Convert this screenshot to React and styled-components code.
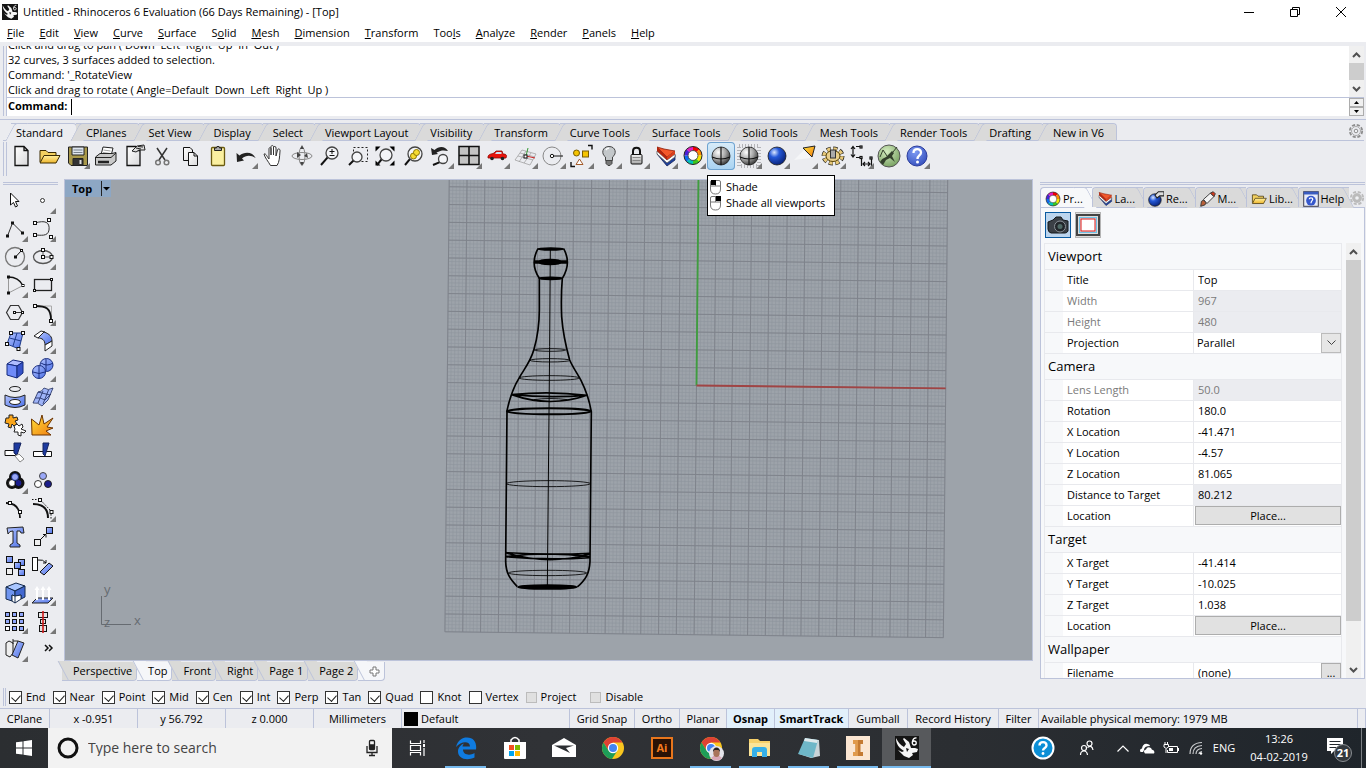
import React, { useState } from "react";
import styled, { createGlobalStyle, css } from "styled-components";

const GlobalStyle = createGlobalStyle`
  * {
    box-sizing: border-box;
  }
  body {
    margin: 0;
    font-family: "Open Sans", "Noto Sans", sans-serif;
    font-size: 11px;
    line-height: 16px;
    color: #000;
    background: #ebecf0;
  }
  button, input, select {
    font: inherit;
    color: inherit;
    margin: 0;
    padding: 0;
    border: 0;
    border-radius: 0;
    background: none;
  }
  svg {
    display: block;
    flex: none;
  }
`;

const line = "#bcc3da";

const Window = styled.div`
  display: flex;
  flex-direction: column;
  height: 100vh;
  overflow: hidden;
`;

const Defs = styled.svg`
  position: absolute;
  width: 0;
  height: 0;
`;

/* title + menu */

const TitleBar = styled.header`
  display: flex;
  align-items: center;
  height: 23px;
  flex: none;
  padding: 0 2px;
  background: #fff;
`;

const Title = styled.h1`
  flex: 1;
  margin: 0;
  padding-left: 5px;
  font-size: 11px;
  font-weight: normal;
`;

const CaptionButton = styled.button`
  display: flex;
  align-items: center;
  justify-content: center;
  width: 46px;
  height: 23px;
`;

const MenuBar = styled.nav`
  display: flex;
  align-items: center;
  gap: 15px;
  height: 19px;
  flex: none;
  padding-left: 7px;
  background: #fff;
`;

const MenuItem = styled.button`
  line-height: 18px;
`;

/* command area */

const CommandArea = styled.section`
  flex: none;
  display: flex;
  height: 78px;
  padding: 4px 2px 3px 3px;
  border-bottom: 1px solid ${line};
`;

const Grip = styled.div`
  flex: none;
  width: 4px;
  border-left: 1px solid ${line};
  border-right: 1px solid ${line};
  ${(p) =>
    p.$flat &&
    css`
      width: auto;
      height: 3px;
      border: 0;
      border-top: 1px solid ${line};
      border-bottom: 1px solid ${line};
    `}
`;

const CommandBody = styled.div`
  flex: 1;
  display: flex;
  flex-direction: column;
`;

const HistoryRow = styled.div`
  display: flex;
  height: 52px;
  border-bottom: 1px solid ${line};
`;

const History = styled.div`
  flex: 1;
  display: flex;
  flex-direction: column;
  justify-content: flex-end;
  overflow: hidden;
  padding-left: 1px;
  background: #fff;
`;

const HistoryLine = styled.div`
  flex: none;
  line-height: 15px;
  white-space: pre;
`;

const Prompt = styled.div`
  flex: 1;
  display: flex;
  align-items: center;
  background: #fff;

  label {
    font-weight: bold;
    padding: 0 4px 2px 1px;
  }
  input {
    flex: 1;
    height: 16px;
    outline: none;
    border-left: 1px solid #000;
  }
`;

const Spin = styled.div`
  display: flex;
  flex-direction: column;
  width: 15px;
  height: 18px;

  button {
    flex: 1;
    display: flex;
    align-items: center;
    justify-content: center;
    border: 1px solid #acacac;
    background: #f0f0f0;
  }
`;

const ScrollBar = styled.div`
  flex: none;
  display: flex;
  flex-direction: column;
  align-items: stretch;
  width: 15px;
  background: #f0f0f0;

  button {
    display: flex;
    align-items: center;
    justify-content: center;
    height: 17px;
  }
`;

const Thumb = styled.div`
  flex: ${(p) => p.$grow};
  background: #cdcdcd;
`;

const Spacer = styled.div`
  flex: ${(p) => p.$grow || 1};
`;

/* toolbar tabs */

const ToolTabs = styled.div`
  flex: none;
  display: flex;
  align-items: flex-end;
  height: 21px;
  padding: 0 2px 0 3px;
`;

const TabStrip = styled.div`
  flex: 1;
  display: flex;
  align-items: flex-end;
  height: 21px;
  padding-left: 8px;
  border-bottom: 1px solid ${line};
`;

const ToolTab = styled.button`
  position: relative;
  z-index: 0;
  height: 17px;
  padding: 0 12px 0 10px;
  line-height: 17px;
  white-space: nowrap;
  border-top: 1px solid ${line};
  border-right: 1px solid ${line};
  border-top-right-radius: 4px;
  background: ${(p) => (p.$active ? "#ebecf0" : "#dadada")};
  background-clip: padding-box;

  &::before {
    content: "";
    position: absolute;
    z-index: -1;
    top: -1px;
    left: -1px;
    width: 12px;
    height: 17px;
    border-top: 1px solid ${line};
    border-left: 1px solid ${line};
    border-top-left-radius: 3px;
    transform: skewX(-28deg);
    background: ${(p) => (p.$active ? "#ebecf0" : "#dadada")};
  }
  ${(p) =>
    p.$active
      ? css`
          padding-left: 5px;
          padding-right: 13px;
          margin-bottom: -1px;
          height: 18px;
        `
      : css`
          margin-left: -1px;
        `}
`;

const GearButton = styled.button`
  display: flex;
  align-items: center;
  justify-content: center;
  width: 16px;
  height: 18px;
`;

const Toolbar = styled.div`
  flex: none;
  display: flex;
  height: 38px;
  padding: 1px 0 0 3px;
`;

const ToolbarGrip = styled(Grip)`
  height: 34px;
`;

const Tool = styled.button`
  position: relative;
  flex: none;
  width: 28px;
  height: 28px;
  ${(p) =>
    p.$hot &&
    css`
      border-radius: 4px;
      box-shadow: inset 0 0 0 1px #6fa3d0;
      background: linear-gradient(#d9ecf9, #a9d3f2);
    `}
`;

const Tooltip = styled.div`
  position: absolute;
  z-index: 5;
  top: 33px;
  left: 0;
  display: flex;
  flex-direction: column;
  width: max-content;
  padding: 3px 9px 4px 2px;
  border: 1px solid #000;
  background: #fff;

  span {
    display: flex;
    align-items: center;
    gap: 5px;
  }
`;

/* middle */

const Workspace = styled.main`
  flex: 1;
  display: flex;
  min-height: 0;
`;

const SideBar = styled.aside`
  flex: none;
  width: 64px;
  padding: 3px 6px 0 1px;
`;

const SideTools = styled.div`
  display: grid;
  grid-template-columns: 28px 28px;
  margin-top: 2px;
`;

const SideGrip = styled(Grip)`
  margin: 0 0 0 2px;
`;

const Center = styled.div`
  flex: 1;
  min-width: 0;
  display: flex;
  flex-direction: column;
`;

const Viewport = styled.div`
  position: relative;
  flex: 1;
  min-height: 0;
  overflow: hidden;
  border: 1px solid ${line};
  background: #9da3aa;
`;

const ViewportTitle = styled.button`
  position: absolute;
  top: 0;
  left: 0;
  display: flex;
  align-items: center;
  gap: 9px;
  height: 17px;
  padding: 0 1px 0 7px;
  font-weight: bold;
  background: #8da7c4;
`;

const Scene = styled.svg`
  width: 100%;
  height: 100%;
`;

const AxisIcon = styled.svg`
  position: absolute;
  left: 30px;
  bottom: 24px;
`;

const ViewTabs = styled.div`
  flex: none;
  display: flex;
  height: 25px;
  padding-top: 1px;
`;

const ViewTab = styled.button`
  position: relative;
  z-index: 0;
  height: 19px;
  padding: 0 4px 0 11px;
  border-bottom: 1px solid ${line};
  border-right: 1px solid ${line};
  border-bottom-right-radius: 4px;
  background: ${(p) => (p.$active ? "#f5f6f9" : "#dadad8")};
  background-clip: padding-box;

  &::before {
    content: "";
    position: absolute;
    z-index: -1;
    bottom: -1px;
    left: 1px;
    width: 12px;
    height: 19px;
    border-bottom: 1px solid ${line};
    border-left: 1px solid ${line};
    transform: skewX(28deg);
    background: ${(p) => (p.$active ? "#f5f6f9" : "#dadad8")};
  }
  &:first-child {
    margin-left: -2px;
  }
`;

/* properties */

const Panel = styled.aside`
  flex: none;
  display: flex;
  flex-direction: column;
  width: 333px;
  padding: 3px 1px 7px 7px;
`;

const PanelTabs = styled.div`
  display: flex;
  align-items: flex-end;
  height: 22px;
  padding-top: 2px;
`;

const PanelTab = styled.button`
  position: relative;
  z-index: 0;
  display: flex;
  align-items: center;
  gap: 2px;
  flex: 1;
  height: 20px;
  padding: 2px 0 0 4px;
  white-space: nowrap;
  border-left: 1px solid ${line};
  border-top: 1px solid ${line};
  border-top-left-radius: 4px;
  background: ${(p) => (p.$active ? "#f7f8fa" : "#dadada")};
  background-clip: padding-box;

  &::after {
    content: "";
    position: absolute;
    z-index: -1;
    top: -1px;
    right: 0;
    width: 12px;
    height: 20px;
    border-top: 1px solid ${line};
    border-right: 1px solid ${line};
    border-top-right-radius: 3px;
    transform: skewX(28deg);
    background: ${(p) => (p.$active ? "#f7f8fa" : "#dadada")};
  }
`;

const PanelBody = styled.div`
  flex: 1;
  min-height: 0;
  display: flex;
  flex-direction: column;
  border: 1px solid ${line};
  background: #f7f8fa;
`;

const ModeButtons = styled.div`
  display: flex;
  gap: 4px;
  flex: none;
  padding: 4px 0 5px 4px;
`;

const ModeButton = styled.button`
  display: flex;
  align-items: center;
  justify-content: center;
  width: 26px;
  height: 26px;
  border: 1px solid ${(p) => (p.$on ? "#0a5aa0" : "#b4b4b4")};
  background: ${(p) => (p.$on ? "#bcd5ee" : "#dcdcdc")};
`;

const PropertyArea = styled.div`
  flex: 1;
  min-height: 0;
  display: flex;
  gap: 4px;
  padding: 0 3px 0 3px;
`;

const PropertyList = styled.div`
  flex: 1;
  overflow: hidden;
  border: 1px solid #e8e9ed;
  border-bottom: 0;
`;

const GroupTitle = styled.h2`
  margin: 0;
  height: 26px;
  padding-left: 3px;
  font-size: 13px;
  font-weight: normal;
  line-height: 25px;
  border-bottom: 1px solid #e8e9ed;
`;

const Row = styled.div`
  display: grid;
  grid-template-columns: 18px 131px 1fr;
  height: 21px;
  color: ${(p) => (p.$dim ? "#7a7a7a" : "#000")};

  > * {
    border-bottom: 1px solid #e8e9ed;
  }
`;

const Name = styled.label`
  padding-left: 4px;
  line-height: 20px;
  border-right: 1px solid #e8e9ed;
  background: #fff;
`;

const Value = styled.div`
  display: flex;
  min-width: 0;
  background: ${(p) => (p.$locked ? "#ebecf0" : "#fff")};

  input {
    flex: 1;
    min-width: 0;
    padding-left: 4px;
    outline: none;
  }
`;

const SelectBox = styled.div`
  position: relative;
  flex: 1;
  display: flex;

  select {
    flex: 1;
    appearance: none;
    padding-left: 3px;
    outline: none;
  }
  span {
    position: absolute;
    top: 0;
    right: 0;
    display: flex;
    align-items: center;
    justify-content: center;
    width: 20px;
    height: 20px;
    border: 1px solid #bbb;
    background: #e6e6e6;
    pointer-events: none;
  }
`;

const PushButton = styled.button`
  flex: ${(p) => (p.$small ? "none" : 1)};
  width: ${(p) => (p.$small ? "20px" : "auto")};
  margin: 0 0 1px 1px;
  line-height: 17px;
  border: 1px solid #adadad;
  background: #e1e1e1;
`;

/* osnap + status */

const Osnaps = styled.div`
  flex: none;
  display: flex;
  align-items: center;
  gap: 7px;
  height: 22px;
  padding: 0 0 0 3px;
`;

const OsnapGrip = styled(Grip)`
  width: 3px;
  height: 18px;
  margin-right: -4px;
`;

const Check = styled.label`
  display: flex;
  align-items: center;
  gap: 4px;
  margin-left: ${(p) => (p.$apart ? "7px" : 0)};

  input {
    position: relative;
    appearance: none;
    width: 13px;
    height: 13px;
    border: 1px solid #333;
    background: #fff;
  }
  input:disabled {
    width: 11px;
    height: 11px;
    border-color: #bcbcbc;
    background: #e0e0e0;
  }
  input:checked::after {
    content: "";
    position: absolute;
    top: 1px;
    left: 3px;
    width: 5px;
    height: 7px;
    border: solid #222;
    border-width: 0 1px 1px 0;
    transform: rotate(42deg);
  }
`;

const StatusBar = styled.footer`
  flex: none;
  display: flex;
  height: 20px;
  border-top: 1px solid ${line};
`;

const StatusCell = styled.button`
  flex: ${(p) => (p.$grow ? 1 : "none")};
  display: flex;
  align-items: center;
  justify-content: ${(p) => (p.$left ? "flex-start" : "center")};
  gap: 3px;
  width: ${(p) => p.$w}px;
  padding-left: ${(p) => (p.$left ? "2px" : 0)};
  white-space: nowrap;
  font-weight: ${(p) => (p.$on ? "bold" : "normal")};
  border-right: 1px solid ${line};
  background: ${(p) => (p.$on ? "#e2f0fb" : "transparent")};
`;

const Swatch = styled.i`
  width: 14px;
  height: 14px;
  background: #000;
`;

/* taskbar */

const TaskBar = styled.div`
  flex: none;
  display: flex;
  height: 40px;
  color: #fff;
  background: linear-gradient(90deg, #2b2e31, #303236 40%, #2b2e32 70%, #1f252b);
`;

const TaskButton = styled.button`
  flex: none;
  display: flex;
  align-items: center;
  justify-content: center;
  width: ${(p) => p.$w || 49}px;
  background: ${(p) => (p.$active ? "#57595c" : "transparent")};
  box-shadow: ${(p) => (p.$active ? "inset 0 -2px #76b9ed" : "none")};
  border: solid transparent;
  border-width: 0 ${(p) => (p.$open ? "4px" : "0")};

  ${(p) =>
    p.$open &&
    css`
      background: linear-gradient(#76b9ed, #76b9ed) bottom / 100% 2px no-repeat padding-box;
    `}
`;

const SearchBox = styled.label`
  flex: none;
  display: flex;
  align-items: center;
  gap: 9px;
  width: 344px;
  padding: 0 12px 0 9px;
  color: #333;
  background: #f2f2f2;

  input {
    flex: 1;
    min-width: 0;
    font-size: 14px;
    outline: none;
  }
  input::placeholder {
    color: #444;
    opacity: 1;
  }
`;

const Clock = styled.button`
  width: 78px;
  line-height: 18px;
  white-space: pre-line;
`;

const Language = styled.button`
  width: 32px;
`;

const ShowDesktop = styled.button`
  width: 5px;
  border-left: 1px solid #7b7f84;
`;

/* icon pieces */

const Dot = ({ x, y, s = 3 }) => (
  <rect x={x - s / 2} y={y - s / 2} width={s} height={s} fill="#fff" stroke="#111" />
);

const Ball = ({ cx, cy, r, fill, stroke = "#1b2f80" }) => (
  <circle cx={cx} cy={cy} r={r} fill={fill} stroke={stroke} />
);

const Lens = ({ x = 17, y = 12, r = 6 }) => (
  <g>
    <path d={`M${x - r * 0.7} ${y + r * 0.7} L6 23`} stroke="#111" strokeWidth="2" />
    <circle cx={x} cy={y} r={r} fill="#f4f5f8" stroke="#444" strokeWidth="1.3" />
  </g>
);

const Wheel = ({ cx, cy, r }) => {
  const colors = ["#f00000", "#ff8a00", "#f4e800", "#3cc81e", "#00c2b8", "#0a6cf0", "#4b1fd8", "#e01cc0"];
  const at = (a) => `${cx + r * Math.sin(a)} ${cy - r * Math.cos(a)}`;
  return (
    <g>
      {colors.map((c, i) => (
        <path
          key={c}
          fill={c}
          d={`M${cx} ${cy} L${at((i * Math.PI) / 4)} A${r} ${r} 0 0 1 ${at(((i + 1) * Math.PI) / 4)} Z`}
        />
      ))}
      <circle cx={cx} cy={cy} r={r} fill="none" stroke="#222" />
      <circle cx={cx} cy={cy} r={r * 0.55} fill="#fff" stroke="#333" strokeWidth="0.8" />
    </g>
  );
};

const Layers = () => (
  <g strokeLinejoin="round" strokeWidth="0.8">
    <path d="M6 12 L16 24 L24 18 V13 L16 18 Z" fill="#1d3f9c" stroke="#15245a" />
    <path d="M6 9 L16 18 L24 12 V15 L16 21 L6 12 Z" fill="#fff" stroke="#555" />
    <path d="M6 5 L16 15 L24 9 L13 7 Z" fill="#f4572a" stroke="#8c1b06" />
    <path d="M6 5 L16 15 V18 L6 9 Z" fill="#b4240c" />
    <path d="M16 15 L24 9 V12 L16 18 Z" fill="#d93c18" />
  </g>
);

const Sphere = ({ grey, pixels }) => (
  <g>
    {pixels && (
      <rect x="4" y="4" width="20" height="20" fill="none" stroke="#b4b4b8" strokeWidth="4" strokeDasharray="1 2" />
    )}
    <circle cx="14" cy="14" r="9" fill={grey ? "url(#greyBall)" : "url(#blueBall)"} stroke="#1b1b1b" strokeWidth="0.8" />
    {grey && <path d="M5 15 q9 4 18 0 M14 5 v18" fill="none" stroke="#111" strokeWidth="1.2" />}
  </g>
);

const Gear = ({ solid }) => (
  <svg width="16" height="16" viewBox="0 0 16 16">
    <circle cx="8" cy="8" r="6.200" fill="none" stroke={solid ? "#bbb" : "#8d8d8d"} strokeWidth="1.800" strokeDasharray="3.200 1.670" />
    <circle cx="8" cy="8" r="4.500" fill={solid ? "#bbb" : "#ebecf0"} stroke={solid ? "#bbb" : "#999"} strokeWidth="0.800" />
    <circle cx="8" cy="8" r="1.800" fill="#f0f1f4" stroke={solid ? "none" : "#8d8d8d"} />
  </svg>
);

const Chevron = ({ down, color = "#505050", w = 9 }) => (
  <svg width={w} height="8" viewBox="0 0 9 8" fill="none" stroke={color} strokeWidth="2">
    <path d={down ? "M1 2 L4.500 5.500 L8 2" : "M1 6 L4.500 2.500 L8 6"} />
  </svg>
);

const Caret = ({ down }) => (
  <svg width="5" height="3" viewBox="0 0 5 3">
    <path d={down ? "M0 0 H5 L2.500 3 Z" : "M0 3 H5 L2.500 0 Z"} />
  </svg>
);

const Rhino = ({ size }) => (
  <svg width={size} height={size} viewBox="0 0 24 24">
    <rect width="24" height="24" fill="#151515" />
    <path d="M1 2 C3 6 5 9 9 11 L11 8 L8 3 L9 2 L14 6 L16 12 L20 12 L23 13 L22 16 L17 17 L18 19 L14 22 L9 20 L3 14 L7 16 L9 15 C4 12 1 8 1 2 Z" fill="#f6f6f6" />
    <path d="M11 12 L14 13 L12 16 Z" fill="#151515" />
    <path d="M21.500 2 C17 1.500 16 9 19 9 C22 9 22 5 19 5 C18 5 17.500 6 17.500 6.500" fill="none" stroke="#fff" strokeWidth="1.300" />
  </svg>
);

const page = <path d="M8 4.500 H17 L21 8.500 V23.500 H8 Z M17 4.500 V8.500 H21" fill="url(#paper)" stroke="#111" strokeWidth="1.300" />;

const topTools = [
  { name: "New", icon: page },
  {
    name: "Open",
    icon: (
      <g stroke="#3a2a00" strokeLinejoin="round">
        <path d="M5 20 V8.500 H11 L13 10.500 H21 V13" fill="#f2d060" />
        <path d="M5 21 L9 13.500 H25 L21 21 Z" fill="url(#gold)" />
      </g>
    ),
  },
  {
    name: "Save",
    more: true,
    icon: (
      <g stroke="#222" strokeLinejoin="round">
        <path d="M5.500 5 H24.500 V23.500 H8 L5.500 21 Z" fill="#a8984a" />
        <path d="M9 5 H21 V13 H9 Z" fill="#dfe6ee" />
        <path d="M10.500 8 H19.500 M10.500 10.500 H19.500" stroke="#77808a" />
        <path d="M10 16.500 H20 V23.500 H10 Z" fill="#333" />
        <path d="M16.500 18 H18.500 V22 H16.500 Z" fill="#ddd" stroke="none" />
      </g>
    ),
  },
  {
    name: "Print",
    icon: (
      <g stroke="#222" strokeLinejoin="round">
        <path d="M10 13 L12 5 L22 6 L20 14 Z" fill="#fff" />
        <path d="M12.500 8 L19.500 9 M12 10.500 L19 11.500" stroke="#888" strokeWidth="0.800" />
        <path d="M4.500 15 L9 11.500 H21 L25 10.500 V19 L20 23 H4.500 Z" fill="#c9c9c9" />
        <path d="M4.500 15.500 H20 L25 11" fill="none" />
        <path d="M7 20 H18" strokeWidth="2.500" />
      </g>
    ),
  },
  {
    name: "Document properties",
    icon: (
      <g>
        {page}
        <path d="M13 9 L18 4 L25 3 L26 8 L20 8 L17 10 Z" fill="#ddd" stroke="#222" />
        <path d="M17 6 L22 7 M19 4.500 L24 5" stroke="#222" />
      </g>
    ),
  },
  {
    name: "Cut",
    icon: (
      <g fill="none" strokeWidth="1.500">
        <path d="M10 6 L18 18 M20 6 L12 18" stroke="#333" />
        <circle cx="11" cy="20.500" r="2.300" stroke="#777" />
        <circle cx="19.500" cy="20.500" r="2.300" stroke="#777" />
      </g>
    ),
  },
  {
    name: "Copy",
    icon: (
      <g fill="url(#paper)" stroke="#111">
        <path d="M8.500 5.500 H15 L17.500 8 V18.500 H8.500 Z" />
        <path d="M13.500 10.500 H19 L22.500 14 V23.500 H13.500 Z M19 10.500 V14 H22.500" />
      </g>
    ),
  },
  {
    name: "Paste",
    icon: (
      <g stroke="#222">
        <rect x="8.500" y="5.500" width="13" height="18" rx="1" fill="#fbf0a0" stroke="#6b5b10" strokeWidth="1.300" />
        <path d="M11.500 8.500 V6 H13.500 L14 4.500 H16 L16.500 6 H18.500 V8.500 Z" fill="#aaa" />
      </g>
    ),
  },
  { name: "Undo", more: true, icon: <path d="M5.500 11 L6 20 L13 18.500 L11 16.500 C15 13 20 13 24.500 16 C22 10 14 9 8.500 13.500 Z" fill="#222" /> },
  {
    name: "Pan",
    icon: (
      <path
        d="M5 12 C7 11 8 15 10 17 V7 C10 5 12 5 12 7 V13 V5 C12 3 14.500 3 14.500 5 V13 V5.500 C15 4 17 4 17 6 V14 L18.500 8 C19 6 21.500 7 21 9 C20.500 15 20.500 20 18 23.500 H11.500 C9 19 6 16 5 12 Z"
        fill="#fff"
        stroke="#333"
      />
    ),
  },
  {
    name: "Rotate view",
    icon: (
      <g fill="none" stroke="#888">
        <ellipse cx="15" cy="14" rx="10" ry="3.500" />
        <ellipse cx="15" cy="14" rx="3" ry="9" />
        <path d="M15 3 l2 4 h-4 z M15 24 l2 -4 h-4 z M10 10 l4 3 l-4 3 z M20 11 l-3 3 l4 2 z" fill="#444" stroke="none" />
      </g>
    ),
  },
  {
    name: "Zoom dynamic",
    icon: (
      <g>
        <Lens x={17} y={11} />
        <path d="M14.500 9.500 h5 M17 7 v5 M14.500 13.500 h5" stroke="#111" />
      </g>
    ),
  },
  {
    name: "Zoom window",
    icon: (
      <g>
        <rect x="10.500" y="5.500" width="14" height="14" fill="none" stroke="#222" strokeDasharray="2 2" />
        <Lens x={14} y={15} r={5} />
      </g>
    ),
  },
  {
    name: "Zoom extents",
    icon: (
      <g>
        <path d="M4.500 4.500 h5 l-5 5 z M23.500 4.500 h-5 l5 5 z M4.500 23.500 h5 l-5 -5 z M23.500 23.500 h-5 l5 -5 z" />
        <Lens x={15} y={13} />
      </g>
    ),
  },
  {
    name: "Zoom selected",
    icon: (
      <g>
        <Lens x={16} y={12} r={7} />
        <circle cx="14.500" cy="14" r="3" fill="#f7dc30" stroke="#8d7600" />
        <circle cx="17.500" cy="10.500" r="3" fill="#f7dc30" stroke="#8d7600" />
      </g>
    ),
  },
  {
    name: "Undo view",
    more: true,
    icon: (
      <g>
        <Lens x={16} y={17} r={4.5} />
        <path d="M4 6 L5 13 L11 12 L9.500 10.500 C14 8 17 8 21 9 C18 4 12 4 7.500 8 Z" fill="#222" />
      </g>
    ),
  },
  {
    name: "Four viewports",
    more: true,
    icon: (
      <g stroke="#111">
        <rect x="4" y="4.500" width="20" height="18" fill="#c4c4c4" strokeWidth="1.500" />
        <path d="M14 4.500 v18 M4 13.500 h20" strokeWidth="1.600" />
      </g>
    ),
  },
  {
    name: "Named views",
    more: true,
    icon: (
      <g>
        <path d="M5 15 C5 12 9 12 11 11 L13 9 H19 L20 12 C24 12 24 14 23 16 H5 Z" fill="#e8140c" stroke="#8c0a05" strokeWidth="0.800" />
        <path d="M13.500 10 H18.500 V12 H12 Z" fill="#cfe3f2" />
        <circle cx="9" cy="16.500" r="1.800" fill="#222" />
        <circle cx="19.500" cy="16.500" r="1.800" fill="#222" />
      </g>
    ),
  },
  {
    name: "CPlane",
    more: true,
    icon: (
      <g fill="none" stroke="#999">
        <path d="M4 18 L11 8 L25 12 L19 23 Z M7 14 L22 18 M9 11 L24 15 M8 20 L15 9 M13 21 L20 11" strokeWidth="0.700" />
        <path d="M15 14 L24 16" stroke="#c22" />
        <path d="M15 14 L17 6" stroke="#393" />
        <Dot x={14.5} y={14.5} />
      </g>
    ),
  },
  {
    name: "Set CPlane",
    more: true,
    icon: (
      <g fill="none" stroke="#888">
        <circle cx="13" cy="14" r="9" />
        <path d="M13 14 H24" stroke="#111" />
        <circle cx="13" cy="14" r="1.700" fill="#fff" stroke="#111" />
      </g>
    ),
  },
  {
    name: "Object snap",
    more: true,
    icon: (
      <g stroke="#111">
        <circle cx="9.500" cy="11" r="3" fill="#f5c400" stroke="#7a5c00" />
        <rect x="15.500" y="9" width="6" height="6" fill="#f5c400" stroke="#7a5c00" />
        <path d="M12.500 17 l3.500 5.500 h-7 z" fill="#fff" stroke="#a35a2a" />
        <path d="M21 3.500 h4 v4 M4 20 v4.500 h4" fill="none" strokeWidth="1.400" />
      </g>
    ),
  },
  {
    name: "Hide objects",
    more: true,
    icon: (
      <g stroke="#444">
        <path d="M14 4.500 C7 4.500 6 12 10.500 15 V18.500 H17.500 V15 C22 12 21 4.500 14 4.500 Z" fill="#c3c7ca" />
        <path d="M11 18.500 H17 V21.500 L15 23.500 H13 L11 21.500 Z" fill="#777" />
        <path d="M11 8 C12 6.500 13 6 14 6.500" stroke="#fff" fill="none" strokeWidth="1.500" />
      </g>
    ),
  },
  {
    name: "Lock objects",
    more: true,
    icon: (
      <g>
        <path d="M10 13 V9 C10 4.500 17 4.500 17 9 V13" fill="none" stroke="#111" strokeWidth="2" />
        <rect x="8" y="12.500" width="11" height="9.500" rx="1" fill="url(#metal)" stroke="#111" />
        <path d="M9.500 15.500 h8 M9.500 18.500 h8" stroke="#777" strokeWidth="0.800" />
      </g>
    ),
  },
  { name: "Layers", more: true, icon: <Layers /> },
  { name: "Object properties", more: true, icon: <Wheel cx={14} cy={13.5} r={9} /> },
  { name: "Shade", hot: true, icon: <Sphere grey /> },
  { name: "Render preview", more: true, icon: <Sphere grey pixels /> },
  { name: "Render", more: true, icon: <Sphere /> },
  {
    name: "Spotlight",
    more: true,
    icon: (
      <g stroke="#222" strokeLinejoin="round">
        <path d="M12 6 L24 4 L21 15 Z" fill="url(#fire)" />
        <path d="M3 18 L13 8 L20 16 Z" fill="#fff" opacity="0.500" stroke="none" />
      </g>
    ),
  },
  {
    name: "Options",
    more: true,
    icon: (
      <g>
        <ellipse cx="14" cy="14" rx="9" ry="7" fill="none" stroke="#222" strokeWidth="5" strokeDasharray="4 2.300" />
        <ellipse cx="14" cy="14" rx="9" ry="7" fill="none" stroke="#e7c878" strokeWidth="3.500" strokeDasharray="3.300 3" strokeDashoffset="-0.300" />
        <ellipse cx="14" cy="14" rx="7" ry="5.500" fill="#e9cf8c" stroke="#5b4608" />
        <rect x="11.500" y="8" width="5" height="8" fill="#aaa" stroke="#333" />
      </g>
    ),
  },
  {
    name: "Dimension",
    more: true,
    icon: (
      <g fill="none" stroke="#111" strokeWidth="1.200">
        <path d="M6 5 V14 M4 7 L6 4.500 L8 7 M4 12.500 L6 15 L8 12.500" />
        <path d="M9 4.500 H13 M9 15.500 H14.500 V24 M24.500 15 V25 M16 22 H23 M18 20 L16 22 L18 24 M21 20 L23 22 L21 24" />
        <Dot x={14} y={5} s={2} />
        <Dot x={14} y={15.5} s={2} />
        <Dot x={24} y={16} s={2} />
      </g>
    ),
  },
  {
    name: "Grasshopper",
    icon: (
      <g>
        <circle cx="14" cy="14" r="11" fill="url(#green)" stroke="#555" />
        <path d="M5 20 C8 15 10 17 14 12 L17 9 L19 11 L17 14 L20 20 L15 16 L11 18 L8 23 Z" fill="#33402c" />
        <path d="M18 10 L22 5 M12 14 L8 8 L5 15" fill="none" stroke="#33402c" />
      </g>
    ),
  },
  {
    name: "Help topics",
    more: true,
    icon: (
      <g>
        <circle cx="14" cy="14" r="10" fill="url(#helpBall)" stroke="#2b3c9c" />
        <path d="M10.500 11 C10.500 6 18 6 18 10.500 C18 13.500 14.500 13.500 14.500 17" fill="none" stroke="#fff" strokeWidth="2.300" />
        <circle cx="14.500" cy="20" r="1.500" fill="#fff" />
      </g>
    ),
  },
];

const blue = "url(#blueFace)";

const sideTools = [
  { name: "Select", icon: <path d="M9.500 6 V18 L12.500 15.500 L14.500 20 L16.500 19 L14.500 14.500 H18 Z" fill="#fff" stroke="#111" /> },
  { name: "Point", more: true, icon: <circle cx="13.500" cy="13.500" r="2" fill="#fff" stroke="#333" /> },
  {
    name: "Polyline",
    more: true,
    icon: (
      <g fill="none" stroke="#333">
        <path d="M6.500 21 L11.500 8 L21.500 18" />
        <Dot x={6.5} y={21} s={2} />
        <Dot x={11.5} y={8} s={2} />
        <Dot x={21.5} y={18} s={2} />
      </g>
    ),
  },
  {
    name: "Control point curve",
    more: true,
    icon: (
      <g fill="none" stroke="#333">
        <path d="M6 8 C16 5 21 7 20 15 C19 22 11 20 6 20" />
        <Dot x={6} y={8} />
        <Dot x={20} y={5} />
        <Dot x={6} y={20} />
        <Dot x={22} y={22} />
      </g>
    ),
  },
  {
    name: "Circle",
    more: true,
    icon: (
      <g fill="none" stroke="#777">
        <circle cx="14" cy="14" r="9.500" strokeWidth="1.300" />
        <path d="M14.500 14 L20.500 7.500" stroke="#111" />
        <Dot x={14.5} y={14} s={2} />
        <Dot x={20.5} y={7.5} s={2} />
      </g>
    ),
  },
  {
    name: "Ellipse",
    more: true,
    icon: (
      <g fill="none" stroke="#555">
        <ellipse cx="14" cy="14" rx="9.500" ry="6.500" strokeWidth="1.300" />
        <path d="M14 7 V14 H22" />
        <Dot x={14} y={7} />
        <Dot x={14} y={14} />
        <Dot x={22.5} y={14} />
      </g>
    ),
  },
  {
    name: "Arc",
    more: true,
    icon: (
      <g fill="none" stroke="#999">
        <path d="M7.500 6 V22 L22 14.500" />
        <path d="M7.500 6 C14 6 19 9 22 14.500" stroke="#111" strokeWidth="1.300" />
        <Dot x={7.5} y={6} s={2} />
        <Dot x={7.5} y={22} s={2} />
        <Dot x={22} y={14.5} s={2} />
      </g>
    ),
  },
  {
    name: "Rectangle",
    more: true,
    icon: (
      <g>
        <rect x="5.500" y="8.500" width="17" height="11" fill="none" stroke="#222" strokeWidth="1.300" />
        <Dot x={5.5} y={19.5} s={2} />
        <Dot x={22.5} y={8.5} s={2} />
      </g>
    ),
  },
  {
    name: "Polygon",
    more: true,
    icon: (
      <g fill="none" stroke="#333">
        <path d="M5.500 13.500 L9.500 6.500 H17.500 L21.500 13.500 L17.500 20.500 H9.500 Z M13.500 13.500 H21" strokeWidth="1.200" />
        <Dot x={13.5} y={13.5} s={2} />
        <Dot x={21.5} y={13.5} s={2} />
      </g>
    ),
  },
  {
    name: "Fillet",
    more: true,
    icon: (
      <g fill="none">
        <path d="M6 7 H22.500 V22" stroke="#aaa" />
        <path d="M6 7 C17 7 22 9 22 21" stroke="#111" strokeWidth="1.800" />
        <Dot x={6} y={7} />
        <Dot x={22} y={22} />
      </g>
    ),
  },
  {
    name: "Surface",
    more: true,
    icon: (
      <g stroke="#1d3a8a">
        <path d="M10 6 L22 6 L18 22 L6 17 Z" fill={blue} />
        <path d="M16 6 L12 19 M8.500 11 L20 14" fill="none" />
        <Dot x={10} y={6} />
        <Dot x={22} y={6} />
        <Dot x={6} y={17} />
        <Dot x={17.5} y={22} />
      </g>
    ),
  },
  {
    name: "Blend surface",
    more: true,
    icon: (
      <g stroke="#222" strokeLinejoin="round">
        <path d="M5 9 L12 4 L16 5 L9 11 Z" fill="#fff" />
        <path d="M9 11 L15 5 C21 7 23 10 23 14 L16 18 C16 13 13 11 9 11 Z" fill={blue} />
        <path d="M16 18 L23 14 V19 L16 24 Z" fill="#fff" />
      </g>
    ),
  },
  {
    name: "Box",
    more: true,
    icon: (
      <g stroke="#152a7c" strokeLinejoin="round">
        <path d="M6 9 L12 5 L22 7 L16 11 Z" fill="#aebcff" />
        <path d="M6 9 L16 11 V23 L6 20 Z" fill="#6f8bf8" />
        <path d="M16 11 L22 7 V18 L16 23 Z" fill="#3652c8" />
      </g>
    ),
  },
  {
    name: "Boolean",
    more: true,
    icon: (
      <g fill="none">
        <Ball cx={17.5} cy={10} r={6.5} fill={blue} />
        <Ball cx={10} cy={17} r={6.5} fill={blue} />
        <path d="M12 8 Q18 12 24 8 M17 4 V16 M4 17 Q10 20 16 17 M10 11 V23" stroke="#1b2f80" />
      </g>
    ),
  },
  {
    name: "Project",
    more: true,
    icon: (
      <g stroke="#222">
        <ellipse cx="14" cy="6" rx="5.500" ry="2.500" fill="none" />
        <path d="M4 12 Q14 17 24 12 V22 Q14 27 4 22 Z" fill={blue} />
        <ellipse cx="14" cy="19" rx="5.500" ry="2.500" fill="#fff" />
      </g>
    ),
  },
  {
    name: "Mesh",
    more: true,
    icon: (
      <g stroke="#1d2a5a" strokeWidth="0.800">
        <path d="M9 9 Q13 9 15 5 Q19 8 24 5 L19 17 Q16 20 13 23 Q9 19 4 20 Z" fill="#9fb4f8" />
        <path d="M6.500 15 Q11 14 16 17 Q19 14 22 11 M14 8 L9 20 M19.500 7 L14 21 M9 9 L21 12" fill="none" />
      </g>
    ),
  },
  {
    name: "Join",
    icon: (
      <g stroke="#222" strokeLinejoin="round">
        <path d="M5 7 L8 7 L8 4 L12 4 L12 7 L16 6 L17 9 L14 10 L16 13 L13 15 L11 13 L10 17 L7 16 L8 13 L4 12 Z" fill="#f9a51a" />
        <path d="M13 15 L16 13 L18 15 L21 13 L22 16 L20 18 L25 20 L23 22 L20 21 L20 25 L17 24 L17 21 L13 21 L14 18 Z" fill="#fff" />
      </g>
    ),
  },
  { name: "Explode", icon: <path d="M2.500 8 L10 14 L13 4 L15 13 L24 7 L18 16 L24 17 L17 20 L22 24 H3 Z" fill="url(#fire)" stroke="#6b3300" /> },
  {
    name: "Trim",
    icon: (
      <g stroke="#111">
        <path d="M4 11.500 H13 L15 16.500 H4 Z" fill="#fff" />
        <path d="M13 4 H20 L16 16 L13 14 Z" fill="#1d3aa0" stroke="#14245e" />
        <path d="M14 17 L18 15 L23 20 L19 23 Z" fill="#fff" stroke="#888" />
      </g>
    ),
  },
  {
    name: "Split",
    icon: (
      <g stroke="#111">
        <path d="M4.500 12.500 H22.500 V17.500 H4.500 Z" fill="#fff" />
        <path d="M14 4 H20 L16 17 L14 15 Z" fill="#1d3aa0" stroke="#14245e" />
      </g>
    ),
  },
  {
    name: "Group",
    more: true,
    icon: (
      <g>
        <g stroke="#111" strokeWidth="4">
          <circle cx="14" cy="10" r="4" />
          <circle cx="11" cy="16" r="4" />
          <circle cx="17.500" cy="16" r="4" />
        </g>
        <Ball cx={11} cy={16} r={3.5} fill="#fff" stroke="#111" />
        <Ball cx={17.5} cy={16} r={3.5} fill="#1b1d8c" stroke="#111" />
        <Ball cx={14} cy={10} r={3.5} fill="#9aa8f8" />
      </g>
    ),
  },
  {
    name: "Ungroup",
    icon: (
      <g>
        <Ball cx={14} cy={9} r={3.5} fill="#9aa8f8" stroke="#444" />
        <Ball cx={9} cy={17} r={3.5} fill="#fff" stroke="#333" />
        <Ball cx={19} cy={17} r={3.5} fill="#1b1d8c" stroke="#222" />
      </g>
    ),
  },
  {
    name: "Edit points",
    icon: (
      <g fill="none">
        <path d="M5 8 C14 8 19 12 19 23" stroke="#111" strokeWidth="1.800" />
        <Dot x={9} y={8} />
        <Dot x={19} y={17} />
      </g>
    ),
  },
  {
    name: "Control points",
    more: true,
    icon: (
      <g fill="none">
        <path d="M4 9 C14 9 19 14 19 23" stroke="#111" strokeWidth="2" />
        <path d="M3 4.500 H11 L22 16 V24" stroke="#111" strokeDasharray="1.500 1.500" />
        <Dot x={11} y={5} />
        <Dot x={22.5} y={17} />
      </g>
    ),
  },
  {
    name: "Text",
    icon: <path d="M6 5 L22 4 L23 10 L20 10 L19 8 L16 8 L16 20 L19 22 V24 H9 V22 L12 20 V8 L9 8.500 L7 11 Z" fill={blue} stroke="#222" />,
  },
  {
    name: "Move",
    more: true,
    icon: (
      <g stroke="#111">
        <rect x="17.500" y="4.500" width="6" height="6" fill={blue} />
        <rect x="5.500" y="16.500" width="6" height="6" fill="#eee" />
        <path d="M12 16 L17 11 M14 11.500 h3 v3" fill="none" />
      </g>
    ),
  },
  {
    name: "Copy objects",
    icon: (
      <g stroke="#111">
        <rect x="5.500" y="5.500" width="6" height="6" fill={blue} />
        <rect x="17.500" y="8.500" width="6" height="6" fill={blue} />
        <rect x="13.500" y="11.500" width="6" height="6" fill={blue} />
        <rect x="17.500" y="18.500" width="6" height="6" fill={blue} />
        <rect x="5.500" y="17.500" width="6" height="6" fill="#eee" />
      </g>
    ),
  },
  {
    name: "Rotate",
    icon: (
      <g stroke="#111">
        <rect x="3.500" y="6.500" width="5" height="13" fill="#fff" />
        <path d="M11 21 L20 12 L24 15 L15 24 Z" fill={blue} />
        <path d="M9 9 Q14 8 17 12 M17 9 v3 h-3" fill="none" />
      </g>
    ),
  },
  {
    name: "Solid tools",
    more: true,
    icon: (
      <g stroke="#152a4c" strokeLinejoin="round">
        <path d="M5 8 L15 4 L24 7 L14 12 Z" fill="#a9c6ff" />
        <path d="M5 8 L14 12 V17 L11 16 V22 L5 20 Z" fill="#6f95f0" />
        <path d="M14 12 L24 7 V18 L20 20 V16 L14 17 Z" fill="#4268d0" />
        <path d="M11 16 L14 17 L20 16 V20 L14 24 L11 22 Z M14 17 V24" fill="#fff" />
      </g>
    ),
  },
  {
    name: "Extrude",
    more: true,
    icon: (
      <g>
        <path d="M3 24 L8 19 H24 L19 24 Z" fill={blue} stroke="#222" />
        <path d="M8 21 V10 M14 21 V10 M20 21 V10" stroke="#fff" strokeWidth="2" />
        <path d="M5.500 11 L8 7 L10.500 11 Z M11.500 11 L14 7 L16.500 11 Z M17.500 11 L20 7 L22.500 11 Z" fill="#fff" />
      </g>
    ),
  },
  {
    name: "Array",
    more: true,
    icon: (
      <g stroke="#111">
        {[0, 1, 2].map((r) =>
          [0, 1, 2].map((c) => (
            <rect
              key={`${r}${c}`}
              x={4.5 + c * 7}
              y={5.5 + r * 7}
              width="4"
              height="4"
              fill={r === 2 && c === 0 ? "#fff" : "#8fa5fa"}
            />
          ))
        )}
      </g>
    ),
  },
  {
    name: "Align",
    more: true,
    icon: (
      <g fill="#e4e4e4" stroke="#111">
        <rect x="9.500" y="5.500" width="9" height="5" />
        <rect x="11.500" y="12.500" width="5" height="4" />
        <rect x="10.500" y="18.500" width="7" height="6" />
        <path d="M14 4 V26" stroke="#d01818" strokeWidth="1.600" />
      </g>
    ),
  },
  {
    name: "Bend",
    more: true,
    icon: (
      <g stroke="#222" strokeLinejoin="round">
        <path d="M5 8 L8 6 L12 8 V18 L9 22 L5 20 Z" fill="#eee" />
        <path d="M17 6 L23 8 L17 23 L11 20 Z" fill={blue} />
        <path d="M12 4 V9 M12 6 H17" fill="none" />
      </g>
    ),
  },
  { name: "More tools", icon: <path d="M16 10 l3 3 l-3 3 M20 10 l3 3 l-3 3" fill="none" stroke="#111" strokeWidth="1.500" /> },
];

const ToolIcon = ({ tool }) => (
  <svg width="28" height="28" viewBox="0 0 28 28">
    {tool.icon}
    {tool.more && <path d="M27 21 V27 H21 Z" fill="#777" />}
  </svg>
);

const Mouse = ({ right }) => (
  <svg width="11" height="15" viewBox="0 0 11 15">
    <path d="M0.500 2 Q0.500 0.500 2 0.500 H9 Q10.500 0.500 10.500 2 V9 Q10.500 14 5.500 14 Q0.500 14 0.500 9 Z" fill="#fff" stroke="#777" />
    <path d="M0.500 6 H10.500 M5.500 0.500 V6" stroke="#777" />
    <rect x={right ? 6 : 1} y="0" width="5" height="5" />
  </svg>
);

/* data */

const menus = [
  ["", "F", "ile"], ["", "E", "dit"], ["", "V", "iew"], ["", "C", "urve"], ["", "S", "urface"],
  ["S", "o", "lid"], ["", "M", "esh"], ["", "D", "imension"], ["", "T", "ransform"], ["Too", "l", "s"],
  ["", "A", "nalyze"], ["", "R", "ender"], ["", "P", "anels"], ["", "H", "elp"],
];

const historyLines = [
  "Click and drag to pan ( Down  Left  Right  Up  In  Out )",
  "32 curves, 3 surfaces added to selection.",
  "Command: '_RotateView",
  "Click and drag to rotate ( Angle=Default  Down  Left  Right  Up )",
];

const toolTabs = [
  "Standard", "CPlanes", "Set View", "Display", "Select", "Viewport Layout", "Visibility", "Transform",
  "Curve Tools", "Surface Tools", "Solid Tools", "Mesh Tools", "Render Tools", "Drafting", "New in V6",
];

const viewTabs = ["Perspective", "Top", "Front", "Right", "Page 1", "Page 2"];

const groups = [
  {
    title: "Viewport",
    rows: [
      { name: "Title", value: "Top" },
      { name: "Width", value: "967", locked: true, dim: true },
      { name: "Height", value: "480", locked: true, dim: true },
      { name: "Projection", value: "Parallel", kind: "select" },
    ],
  },
  {
    title: "Camera",
    rows: [
      { name: "Lens Length", value: "50.0", locked: true, dim: true },
      { name: "Rotation", value: "180.0" },
      { name: "X Location", value: "-41.471" },
      { name: "Y Location", value: "-4.57" },
      { name: "Z Location", value: "81.065" },
      { name: "Distance to Target", value: "80.212", locked: true },
      { name: "Location", value: "Place...", kind: "button" },
    ],
  },
  {
    title: "Target",
    rows: [
      { name: "X Target", value: "-41.414" },
      { name: "Y Target", value: "-10.025" },
      { name: "Z Target", value: "1.038" },
      { name: "Location", value: "Place...", kind: "button" },
    ],
  },
  { title: "Wallpaper", rows: [{ name: "Filename", value: "(none)", kind: "file" }] },
];

const osnaps = [
  ["End", true], ["Near", true], ["Point", true], ["Mid", true], ["Cen", true], ["Int", true], ["Perp", true],
  ["Tan", true], ["Quad", true], ["Knot", false], ["Vertex", false],
];

const statusLeft = [["CPlane", 50], ["x -0.951", 88], ["y 56.792", 88], ["z 0.000", 88], ["Millimeters", 88]];

const statusRight = [
  ["Grid Snap", 65], ["Ortho", 45], ["Planar", 47], ["Osnap", 48, true], ["SmartTrack", 74, true],
  ["Gumball", 59], ["Record History", 91], ["Filter", 40],
];

/* panel tab icons */

const SmallIcon = ({ children }) => (
  <svg width="16" height="16" viewBox="3 3 23 23">
    {children}
  </svg>
);

const panelTabs = [
  { label: "Pr...", icon: <Wheel cx={14.5} cy={14.5} r={10} /> },
  { label: "La...", icon: <Layers /> },
  {
    label: "Re...",
    icon: (
      <g>
        <circle cx="13" cy="16" r="9" fill="url(#blueBall)" stroke="#111" />
        <path d="M13 9 L18 4 H26 V10 H20 L16 13 Z" fill="#ddd" stroke="#222" strokeWidth="1.500" />
      </g>
    ),
  },
  {
    label: "M...",
    icon: (
      <g stroke="#333" strokeWidth="1.300" strokeLinejoin="round">
        <path d="M4 25 L5 18 L8 16 L12 20 L10 23 Z" fill="#b8603a" />
        <path d="M8 15 L18 6 L23 11 L13 21 Z" fill="#f4f4f4" />
        <path d="M18 6 L22 4 L25 7 L23 11 Z" fill="#d33a1c" />
      </g>
    ),
  },
  { label: "Lib...", icon: topTools[1].icon },
  {
    label: "Help",
    icon: (
      <g>
        <rect x="4" y="4" width="21" height="21" fill="#e8ecf8" stroke="#445" strokeWidth="1.500" />
        <rect x="4" y="4" width="21" height="4" fill="#3a5cc0" />
        <circle cx="14.500" cy="17" r="7" fill="#3557cc" />
        <path d="M12 15 C12 12 17 12 17 15 C17 17 14.500 17 14.500 20.500" fill="none" stroke="#fff" strokeWidth="1.800" />
      </g>
    ),
  },
];

/* taskbar icons */

const Chrome = ({ badge }) => (
  <svg width="26" height="26" viewBox="-1 -1 26 26">
    <circle cx="12" cy="12" r="11" fill="#f9c61f" />
    <path d="M2.500 6.500 A11 11 0 0 1 21.500 6.500 H12 L7.500 14.500 Z" fill="#de4234" />
    <path d="M2.500 6.500 A11 11 0 0 0 11 23 L16.500 14.500 L7.500 14.500 Z" fill="#1d9d58" />
    <circle cx="12" cy="12" r="5.200" fill="#fff" />
    <circle cx="12" cy="12" r="4" fill="#4384f3" />
    {badge && (
      <g>
        <circle cx="17.500" cy="17.500" r="7.500" fill="#e4e4ea" />
        <path d="M12 22 Q17.500 16 23 22 Q17.500 27 12 22 Z" fill="#d9a7b5" />
        <ellipse cx="17.500" cy="17" rx="3.200" ry="4" fill="#a9745a" />
        <path d="M14 16 C13.500 10 21.500 10 21 16 L19.500 14 H15.500 Z" fill="#262020" />
      </g>
    )}
  </svg>
);

const apps = [
  {
    name: "Task View",
    icon: (
      <svg width="18" height="18" viewBox="0 0 18 18" fill="none" stroke="#fff" strokeWidth="1.200">
        <path d="M2.500 1.500 V4.500 H12.500 V1.500 M2.500 16.500 V13.500 H12.500 V16.500 M2.500 6.500 H12.500 V11.500 H2.500 Z M16 1 V4 M16 9 V17" />
        <rect x="15" y="5" width="2" height="3" fill="#fff" stroke="none" />
      </svg>
    ),
  },
  {
    name: "Edge",
    open: true,
    icon: (
      <svg width="24" height="24" viewBox="0 0 24 24">
        <path d="M2 11 C4 4 8 1.500 13 1.500 C20 1.500 23 7 22 13.500 H9 C9 19 16 20 20.500 17 V21.500 C12 25.500 4 22 4 15.500 C4 11.500 7 8.500 10 7.500 C9 8.500 8.500 9.500 8.500 10.500 H16 C16 4.500 7 5 2 11 Z" fill="#0f7be0" />
      </svg>
    ),
  },
  {
    name: "Store",
    icon: (
      <svg width="24" height="24" viewBox="0 0 24 24">
        <path d="M8 7 V4 Q12 -1 16 4 V7" fill="none" stroke="#fff" strokeWidth="1.500" />
        <path d="M1 6 H23 V22 Q23 23 22 23 H2 Q1 23 1 22 Z" fill="#fff" />
        <rect x="6" y="9" width="5" height="5" fill="#f25022" />
        <rect x="12" y="9" width="5" height="5" fill="#7fba00" />
        <rect x="6" y="15" width="5" height="5" fill="#00a4ef" />
        <rect x="12" y="15" width="5" height="5" fill="#ffb900" />
      </svg>
    ),
  },
  {
    name: "Mail",
    icon: (
      <svg width="24" height="20" viewBox="0 0 24 20">
        <path d="M0 7 L12 0 L24 7 V19 H0 Z" fill="#fff" />
        <path d="M2 7.500 H22 L14 10 L18 15 Z" fill="#2c2e32" />
      </svg>
    ),
  },
  { name: "Chrome", icon: <Chrome /> },
  {
    name: "Illustrator",
    icon: (
      <svg width="22" height="22" viewBox="0 0 22 22">
        <rect x="1" y="1" width="20" height="20" fill="#2a1206" stroke="#e8761c" strokeWidth="2" />
        <text x="11" y="15" textAnchor="middle" fontSize="11" fontWeight="bold" fill="#f57c1f">Ai</text>
      </svg>
    ),
  },
  { name: "Chrome profile", open: true, icon: <Chrome badge /> },
  {
    name: "File Explorer",
    open: true,
    icon: (
      <svg width="24" height="22" viewBox="0 0 24 22">
        <path d="M1 2 H10 L12 4 H22 V19 H1 Z" fill="#f6d069" />
        <path d="M1 6 H22 V19 H1 Z" fill="#fbe498" />
        <path d="M4 20 V13 Q4 10 7 10 H16 Q19 10 19 13 V20 H14 V15 H9 V20 Z" fill="#36b0e8" />
      </svg>
    ),
  },
  {
    name: "Notepad",
    open: true,
    icon: (
      <svg width="24" height="24" viewBox="0 0 24 24">
        <path d="M9 3 L22 4 L23 20 L14 22 L2 18 Z" fill="#c9d4d8" />
        <path d="M8 2 L21 4 L16 22 L1 18 Z" fill="#6fb7c8" />
        <path d="M8 2 L21 4 L20 7 L7 5 Z" fill="#dfe9ec" />
      </svg>
    ),
  },
  {
    name: "Inventor",
    open: true,
    icon: (
      <svg width="24" height="24" viewBox="0 0 24 24">
        <rect width="24" height="24" fill="#fbe6d2" />
        <path d="M7 4 H17 V8 H14.500 V16 H17 V20 H7 V16 H9.500 V8 H7 Z" fill="#c47a32" />
        <path d="M7 4 H12 V20 H7 V16 H9.500 V8 H7 Z" fill="#e09a4c" />
      </svg>
    ),
  },
  { name: "Rhinoceros", active: true, icon: <Rhino size={24} /> },
];

const tray = [
  {
    name: "Help",
    w: 40,
    icon: (
      <svg width="24" height="24" viewBox="0 0 24 24">
        <circle cx="12" cy="12" r="10.500" fill="#0c8fd6" stroke="#fff" strokeWidth="2" />
        <path d="M8.500 9.500 C8.500 5 15.500 5 15.500 9.500 C15.500 12 12 12 12 14.500" fill="none" stroke="#fff" strokeWidth="2.400" />
        <circle cx="12" cy="17.500" r="1.400" fill="#fff" />
      </svg>
    ),
  },
  {
    name: "People",
    w: 48,
    icon: (
      <svg width="16" height="16" viewBox="0 0 16 16" fill="none" stroke="#fff" strokeWidth="1.200">
        <circle cx="5" cy="8" r="2.500" />
        <path d="M1.500 15 Q1.500 11 5 11 Q8 11 8.500 15" />
        <circle cx="10.500" cy="3.500" r="2.500" />
        <path d="M8.500 7.500 Q13 4.500 14 10" />
      </svg>
    ),
  },
  {
    name: "Show hidden icons",
    w: 24,
    icon: (
      <svg width="12" height="7" viewBox="0 0 12 7" fill="none" stroke="#fff" strokeWidth="1.200">
        <path d="M0.500 6.500 L6 1 L11.500 6.500" />
      </svg>
    ),
  },
  {
    name: "OneDrive",
    w: 24,
    icon: (
      <svg width="16" height="11" viewBox="0 0 16 11" fill="#fff">
        <path d="M4 9 H1.500 Q0 6 3 5.500 Q4 0 8.500 1 Q11 1.500 11 3 Q5 3 5 7 Z" />
        <path d="M6 10.500 Q3.500 7.500 7 6.500 Q8 3.500 11 4.500 Q12.500 5 12.800 6.500 Q16.500 7.500 15 10.500 Z" />
      </svg>
    ),
  },
  {
    name: "Battery",
    w: 24,
    icon: (
      <svg width="16" height="13" viewBox="0 0 16 13" fill="none" stroke="#fff">
        <path d="M6 4.500 H14.500 V10.500 H4.500 V8 M15.500 6 V9 M1 2.500 H5.500 V5 Q3 8 1 5 Z M2 0 V2 M4.500 0 V2 M3 7 V11" />
        <rect x="6" y="6" width="4" height="3" fill="#fff" stroke="none" />
      </svg>
    ),
  },
  {
    name: "Network",
    w: 25,
    icon: (
      <svg width="14" height="14" viewBox="0 0 14 14" fill="none" stroke="#c8cacc">
        <path d="M1 13 Q1 2 13 1.500 M4 13 Q4 5 13 4.500 M7 13 Q7 8 13 7.500 M10 13 Q10 11 13 10.500" strokeWidth="1.200" />
        <circle cx="12" cy="12.500" r="1.200" fill="#fff" stroke="none" />
      </svg>
    ),
  },
];

/* scene */

const gridLines = (step) => {
  const out = [];
  for (let i = -70; i <= 70; i += step) {
    out.push(`M${i} -70 V70 M-70 ${i} H70`);
  }
  return out.join(" ");
};

const Grid = () => (
  <g transform="matrix(3.56 0.042 -0.034 3.56 631.500 205.500)" fill="none">
    <path d={gridLines(1)} stroke="#8f959d" strokeWidth="0.170" />
    <path d={gridLines(5)} stroke="#7e838b" strokeWidth="0.270" />
    <path d="M0 0 V-70" stroke="#3f9d3f" strokeWidth="0.520" />
    <path d="M0 0 H70" stroke="#a04444" strokeWidth="0.520" />
  </g>
);

const Bottle = () => (
  <g transform="translate(365 0) scale(0.3333)" fill="none" stroke="#000" strokeWidth="5">
    <path d="M324 206 C308 235 306 262 328 295 L328 390 C328 450 320 480 312 508 C300 550 280 570 268 593 C250 622 238 660 231 692 L227 1145 C228 1180 240 1197 262 1220" />
    <path d="M401 206 C417 235 418 262 397 295 C394 330 393 360 395 410 C398 450 405 490 419 540 C430 565 442 580 453 601 C465 625 478 660 484 695 L480 1145 C478 1180 468 1198 442 1221" />
    <path d="M361 206 L359 500 L352 1220" strokeWidth="3" />
    <ellipse cx="362" cy="207" rx="38" ry="3" fill="#000" />
    <path d="M312 246 H412" strokeWidth="10" />
    <ellipse cx="360" cy="246" rx="32" ry="7" fill="#000" />
    <ellipse cx="362" cy="295" rx="35" ry="3" fill="#000" />
    <g strokeWidth="2.500">
      <ellipse cx="360" cy="510" rx="47" ry="4" />
      <ellipse cx="360" cy="541" rx="60" ry="5" />
      <ellipse cx="358" cy="594" rx="90" ry="7" />
      <ellipse cx="355" cy="911" rx="126" ry="9" />
      <ellipse cx="353" cy="1179" rx="117" ry="8" />
      <path d="M312 659 Q358 652 412 659" />
    </g>
    <path d="M245 644 Q358 632 472 646 Q358 684 245 644 Z M245 644 Q358 655 472 646" strokeWidth="5" />
    <ellipse cx="357" cy="694" rx="126" ry="9" strokeWidth="6" />
    <path d="M227 1118 Q353 1126 480 1120 M227 1118 Q353 1158 480 1122 M227 1130 Q353 1114 480 1130 M227 1130 Q353 1142 480 1133" />
    <ellipse cx="352" cy="1221" rx="88" ry="6" fill="#000" />
  </g>
);

const SharedDefs = () => (
  <Defs aria-hidden="true">
    <defs>
      <linearGradient id="paper" x2="1" y2="1">
        <stop offset="0" stopColor="#fff" />
        <stop offset="1" stopColor="#d8d8da" />
      </linearGradient>
      <linearGradient id="gold" x2="0" y2="1">
        <stop offset="0" stopColor="#fff0a0" />
        <stop offset="1" stopColor="#eeb52a" />
      </linearGradient>
      <linearGradient id="metal" x2="0" y2="1">
        <stop offset="0" stopColor="#f0f0f0" />
        <stop offset="1" stopColor="#a8a8a8" />
      </linearGradient>
      <linearGradient id="fire" x2="1" y2="1">
        <stop offset="0" stopColor="#ffe23a" />
        <stop offset="1" stopColor="#f07a10" />
      </linearGradient>
      <linearGradient id="blueFace" x2="1" y2="1">
        <stop offset="0" stopColor="#b4c4ff" />
        <stop offset="1" stopColor="#4a6fe6" />
      </linearGradient>
      <radialGradient id="greyBall" cx="0.350" cy="0.300" r="0.800">
        <stop offset="0" stopColor="#fff" />
        <stop offset="0.500" stopColor="#a6a6a6" />
        <stop offset="1" stopColor="#222" />
      </radialGradient>
      <radialGradient id="blueBall" cx="0.350" cy="0.300" r="0.800">
        <stop offset="0" stopColor="#dbe8ff" />
        <stop offset="0.350" stopColor="#2458d8" />
        <stop offset="1" stopColor="#051a6a" />
      </radialGradient>
      <radialGradient id="helpBall" cx="0.400" cy="0.300" r="0.800">
        <stop offset="0" stopColor="#7f9cf4" />
        <stop offset="1" stopColor="#2f49b8" />
      </radialGradient>
      <radialGradient id="green" cx="0.400" cy="0.300" r="0.800">
        <stop offset="0" stopColor="#d4ecc0" />
        <stop offset="1" stopColor="#6f9a58" />
      </radialGradient>
    </defs>
  </Defs>
);

const PropertyValue = ({ id, row }) => {
  if (row.kind === "select") {
    return (
      <SelectBox>
        <select id={id} defaultValue={row.value}>
          <option>Parallel</option>
          <option>Perspective</option>
        </select>
        <span>
          <svg width="9" height="6" viewBox="0 0 9 6" fill="none" stroke="#444">
            <path d="M0.500 0.500 L4.500 4.500 L8.500 0.500" />
          </svg>
        </span>
      </SelectBox>
    );
  }
  if (row.kind === "button") {
    return <PushButton id={id}>{row.value}</PushButton>;
  }
  return (
    <>
      <input id={id} defaultValue={row.value} readOnly={row.locked} />
      {row.kind === "file" && <PushButton $small>...</PushButton>}
    </>
  );
};

const Properties = () => (
  <Panel>
    <Grip $flat />
    <PanelTabs>
      {panelTabs.map((tab, i) => (
        <PanelTab key={tab.label} $active={i === 0}>
          <SmallIcon>{tab.icon}</SmallIcon>
          {tab.label}
        </PanelTab>
      ))}
      <GearButton aria-label="Panel options">
        <Gear solid />
      </GearButton>
    </PanelTabs>
    <PanelBody>
      <ModeButtons>
        <ModeButton $on aria-label="Viewport properties">
          <svg width="22" height="18" viewBox="0 0 22 18">
            <path d="M1 6 L6 4 L9 1 H14 L16 4 L21 5 V15 Q20 17 18 17 H4 Q1 16 1 13 Z" fill="#3b4046" stroke="#15181b" />
            <circle cx="13" cy="10.500" r="5.500" fill="#22262a" stroke="#8b9299" />
            <circle cx="13" cy="10.500" r="2.500" fill="#4f6a66" />
          </svg>
        </ModeButton>
        <ModeButton aria-label="Page properties">
          <svg width="24" height="22" viewBox="0 0 24 22" fill="none">
            <rect x="1" y="1" width="22" height="20" fill="#ddd" stroke="#444" strokeWidth="2" />
            <rect x="3.500" y="3.500" width="17" height="15" stroke="#6fc3e8" />
            <rect x="5" y="5" width="14" height="12" fill="#fff" stroke="#e01818" />
          </svg>
        </ModeButton>
      </ModeButtons>
      <PropertyArea>
        <PropertyList>
          {groups.map((group) => (
            <React.Fragment key={group.title}>
              <GroupTitle>{group.title}</GroupTitle>
              {group.rows.map((row) => {
                const id = `${group.title}-${row.name}`.replace(/ /g, "-");
                return (
                  <Row key={id} $dim={row.dim}>
                    <i />
                    <Name htmlFor={id}>{row.name}</Name>
                    <Value $locked={row.locked}>
                      <PropertyValue id={id} row={row} />
                    </Value>
                  </Row>
                );
              })}
            </React.Fragment>
          ))}
        </PropertyList>
        <ScrollBar>
          <button aria-label="Scroll up">
            <Chevron />
          </button>
          <Thumb $grow={9} />
          <Spacer />
          <button aria-label="Scroll down">
            <Chevron down />
          </button>
        </ScrollBar>
      </PropertyArea>
    </PanelBody>
  </Panel>
);

const App = () => {
  const [activeView, setActiveView] = useState("Top");

  return (
    <Window>
      <GlobalStyle />
      <SharedDefs />
      <TitleBar>
        <Rhino size={16} />
        <Title>Untitled - Rhinoceros 6 Evaluation (66 Days Remaining) - [Top]</Title>
        <CaptionButton aria-label="Minimize">
          <svg width="10" height="10" viewBox="0 0 10 10" stroke="#000">
            <path d="M0 5.500 H10" />
          </svg>
        </CaptionButton>
        <CaptionButton aria-label="Restore">
          <svg width="10" height="10" viewBox="0 0 10 10" stroke="#000" fill="none">
            <path d="M0.500 2.500 H7.500 V9.500 H0.500 Z M2.500 2.500 V0.500 H9.500 V7.500 H7.500" />
          </svg>
        </CaptionButton>
        <CaptionButton aria-label="Close">
          <svg width="10" height="10" viewBox="0 0 10 10" stroke="#000">
            <path d="M0 0 L10 10 M10 0 L0 10" />
          </svg>
        </CaptionButton>
      </TitleBar>
      <MenuBar>
        {menus.map(([before, key, after]) => (
          <MenuItem key={before + key + after}>
            {before}
            <u>{key}</u>
            {after}
          </MenuItem>
        ))}
      </MenuBar>

      <CommandArea>
        <Grip />
        <CommandBody>
          <HistoryRow>
            <History>
              {historyLines.map((text) => (
                <HistoryLine key={text}>{text}</HistoryLine>
              ))}
            </History>
            <ScrollBar>
              <button aria-label="Scroll up">
                <Chevron />
              </button>
              <Thumb $grow={1} />
              <button aria-label="Scroll down">
                <Chevron down />
              </button>
            </ScrollBar>
          </HistoryRow>
          <Prompt>
            <label htmlFor="command">Command:</label>
            <input id="command" />
            <Spin>
              <button aria-label="Previous">
                <Caret />
              </button>
              <button aria-label="Next">
                <Caret down />
              </button>
            </Spin>
          </Prompt>
        </CommandBody>
      </CommandArea>

      <ToolTabs>
        <TabStrip>
          {toolTabs.map((tab, i) => (
            <ToolTab key={tab} $active={i === 0}>
              {tab}
            </ToolTab>
          ))}
          <Spacer />
          <GearButton aria-label="Toolbar options">
            <Gear />
          </GearButton>
        </TabStrip>
      </ToolTabs>
      <Toolbar>
        <ToolbarGrip />
        {topTools.map((tool) => (
          <Tool key={tool.name} $hot={tool.hot} aria-label={tool.name}>
            <ToolIcon tool={tool} />
            {tool.hot && (
              <Tooltip>
                <span>
                  <Mouse />
                  Shade
                </span>
                <span>
                  <Mouse right />
                  Shade all viewports
                </span>
              </Tooltip>
            )}
          </Tool>
        ))}
      </Toolbar>

      <Workspace>
        <SideBar>
          <SideGrip $flat />
          <SideTools>
            {sideTools.map((tool) => (
              <Tool key={tool.name} aria-label={tool.name}>
                <ToolIcon tool={tool} />
              </Tool>
            ))}
          </SideTools>
        </SideBar>
        <Center>
          <Viewport>
            <Scene>
              <Grid />
              <Bottle />
            </Scene>
            <ViewportTitle>
              Top
              <svg width="9" height="15" viewBox="0 0 9 15">
                <path d="M0.500 0 V15" stroke="#222" />
                <path d="M2 6 H9 L5.500 9.500 Z" />
              </svg>
            </ViewportTitle>
            <AxisIcon width="50" height="66" viewBox="0 0 50 66" fontSize="13" fill="#666b71">
              <path d="M6.500 26 V54.500 H36" fill="none" stroke="#666b71" />
              <text x="9" y="24">y</text>
              <text x="39" y="55">x</text>
              <text x="9" y="57">z</text>
            </AxisIcon>
          </Viewport>
          <ViewTabs>
            {viewTabs.map((tab) => (
              <ViewTab key={tab} $active={tab === activeView} onClick={() => setActiveView(tab)}>
                {tab}
              </ViewTab>
            ))}
            <ViewTab $active aria-label="New layout">
              <svg width="11" height="11" viewBox="0 0 11 11">
                <path d="M4 1 H7 V4 H10 V7 H7 V10 H4 V7 H1 V4 H4 Z" fill="#fff" stroke="#777" />
              </svg>
            </ViewTab>
          </ViewTabs>
        </Center>
        <Properties />
      </Workspace>

      <Osnaps>
        <OsnapGrip />
        {osnaps.map(([name, on]) => (
          <Check key={name}>
            <input type="checkbox" defaultChecked={on} />
            {name}
          </Check>
        ))}
        <Check>
          <input type="checkbox" disabled />
          Project
        </Check>
        <Check $apart>
          <input type="checkbox" disabled />
          Disable
        </Check>
      </Osnaps>

      <StatusBar>
        {statusLeft.map(([text, w]) => (
          <StatusCell key={text} $w={w}>
            {text}
          </StatusCell>
        ))}
        <StatusCell $w={168} $left>
          <Swatch />
          Default
        </StatusCell>
        {statusRight.map(([text, w, on]) => (
          <StatusCell key={text} $w={w} $on={on}>
            {text}
          </StatusCell>
        ))}
        <StatusCell $grow $left>
          Available physical memory: 1979 MB
        </StatusCell>
        <StatusCell $w={8} aria-label="Resize" />
      </StatusBar>

      <TaskBar>
        <TaskButton $w={48} aria-label="Start">
          <svg width="16" height="16" viewBox="0 0 16 16" fill="#fff">
            <path d="M0 2.300 L6.500 1.400 V7.500 H0 Z M7.500 1.200 L16 0 V7.500 H7.500 Z M0 8.500 H6.500 V14.600 L0 13.700 Z M7.500 8.500 H16 V16 L7.500 14.800 Z" />
          </svg>
        </TaskButton>
        <SearchBox>
          <svg width="22" height="22" viewBox="0 0 22 22" fill="none" stroke="#111">
            <circle cx="11" cy="11" r="9" strokeWidth="3" />
          </svg>
          <input placeholder="Type here to search" />
          <svg width="16" height="18" viewBox="0 0 16 18" fill="none" stroke="#222" strokeWidth="1.300">
            <rect x="5.500" y="1.500" width="5" height="9" rx="1" />
            <path d="M6 6 H10 V10 H6 Z" fill="#222" />
            <path d="M3 7 V13.500 H13 V7 M8 13.500 V17 M5 16.500 H11" />
          </svg>
        </SearchBox>
        {apps.map((app) => (
          <TaskButton key={app.name} $open={app.open} $active={app.active} aria-label={app.name}>
            {app.icon}
          </TaskButton>
        ))}
        <Spacer />
        {tray.map((item) => (
          <TaskButton key={item.name} $w={item.w} aria-label={item.name}>
            {item.icon}
          </TaskButton>
        ))}
        <Language>ENG</Language>
        <Clock>{"13:26\n04-02-2019"}</Clock>
        <TaskButton $w={43} aria-label="Notifications">
          <svg width="30" height="28" viewBox="0 0 30 28">
            <path d="M2 4 H18 V17 H9 L6 20 V17 H2 Z" fill="#fff" />
            <path d="M4.500 7.500 H15.500 M4.500 10.500 H15.500 M4.500 13.500 H12" stroke="#23282e" />
            <circle cx="18" cy="19" r="8.500" fill="#33383d" stroke="#8b8f93" />
            <text x="18" y="23" textAnchor="middle" fontSize="11" fontWeight="bold" fill="#fff">21</text>
          </svg>
        </TaskButton>
        <ShowDesktop aria-label="Show desktop" />
      </TaskBar>
    </Window>
  );
};

export default App;
